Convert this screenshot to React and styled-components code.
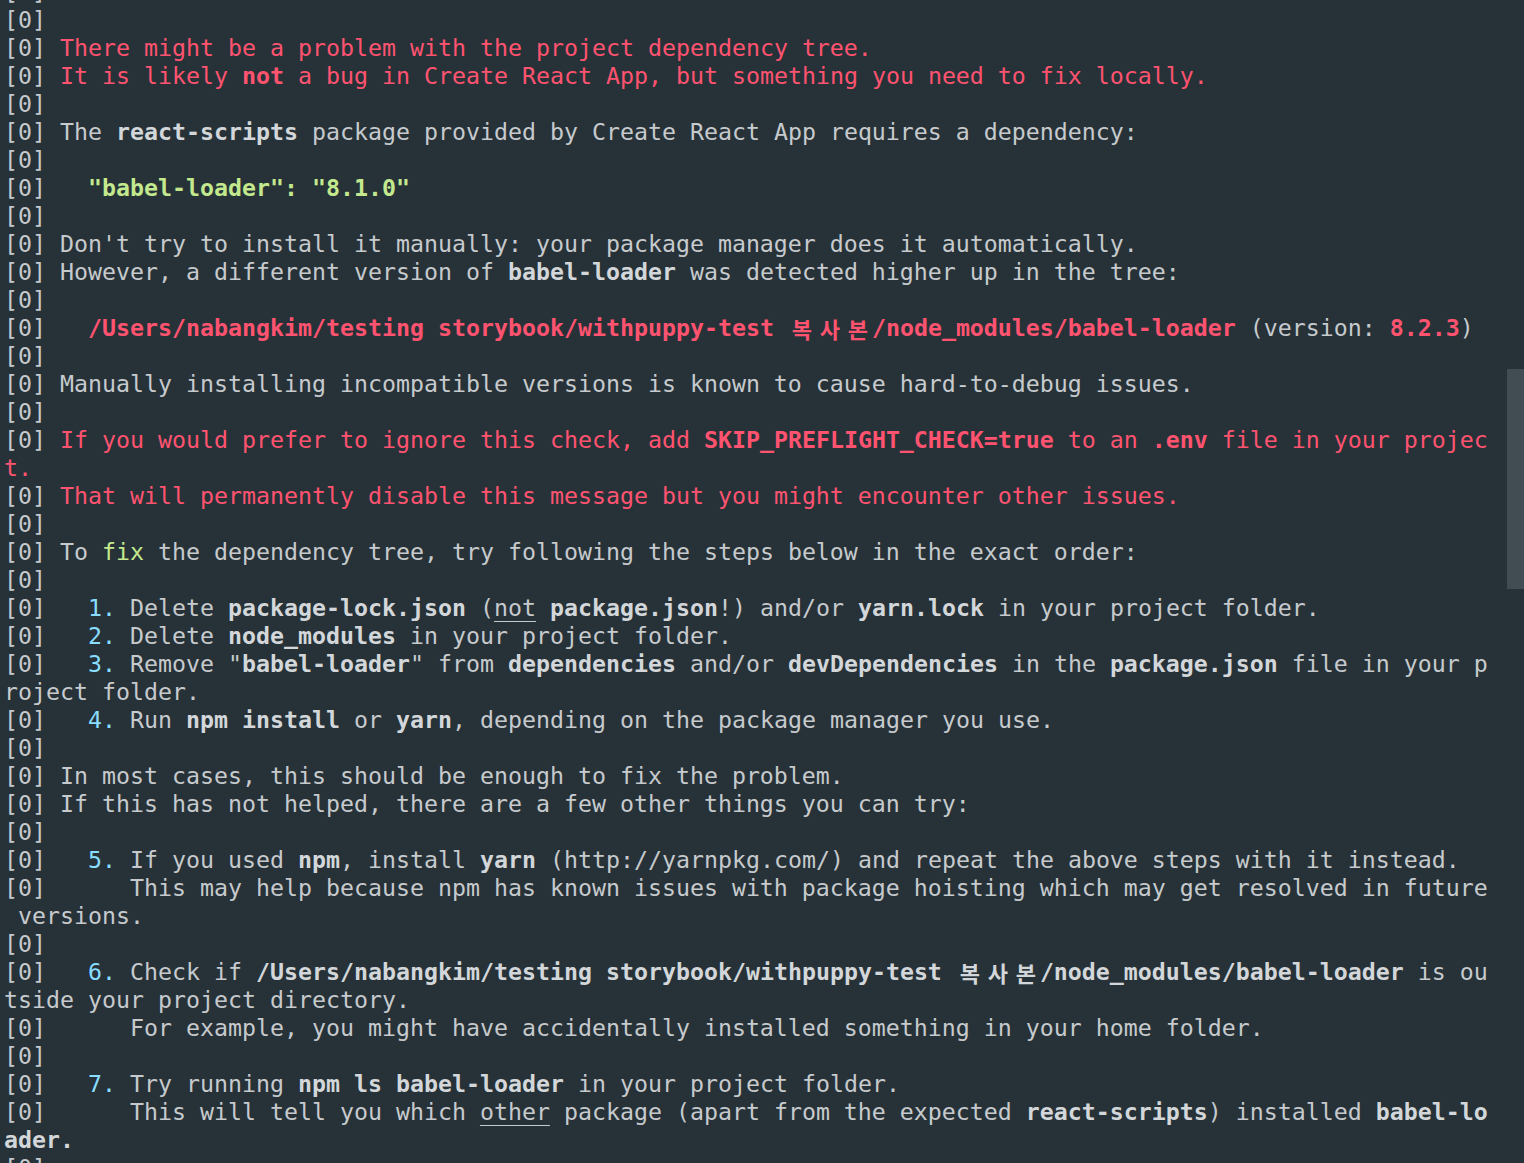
// Terminal : CRA preflight check 오류 로그 화면

import React from "react";
import styled, { createGlobalStyle, css } from "styled-components";

const colors = {
  bg: "#263238",
  text: "#c6cacd",
  red: "#ff5370",
  green: "#c3e88d",
  cyan: "#89ddff",
  thumb: "#414c53",
};

const GlobalStyle = createGlobalStyle`
  html, body {
    margin: 0;
    padding: 0;
    background: ${colors.bg};
    overflow: hidden;
  }
`;

// 한 줄의 조각: [텍스트, 스타일, 전각문자 여부]
const P = "[0]";
const LINES = [
  [[P]],
  [[P]],
  [["[0] "], ["There might be a problem with the project dependency tree.", "red"]],
  [
    ["[0] "],
    ["It is likely ", "red"],
    ["not", "redBold"],
    [" a bug in Create React App, but something you need to fix locally.", "red"],
  ],
  [[P]],
  [
    ["[0] The "],
    ["react-scripts", "bold"],
    [" package provided by Create React App requires a dependency:"],
  ],
  [[P]],
  [["[0]   "], ['"babel-loader": "8.1.0"', "greenBold"]],
  [[P]],
  [["[0] Don't try to install it manually: your package manager does it automatically."]],
  [
    ["[0] However, a different version of "],
    ["babel-loader", "bold"],
    [" was detected higher up in the tree:"],
  ],
  [[P]],
  [
    ["[0]   "],
    ["/Users/nabangkim/testing storybook/withpuppy-test ", "redBold"],
    ["복사본", "redBold", true],
    ["/node_modules/babel-loader", "redBold"],
    [" (version: "],
    ["8.2.3", "redBold"],
    [")"],
  ],
  [[P]],
  [["[0] Manually installing incompatible versions is known to cause hard-to-debug issues."]],
  [[P]],
  [
    ["[0] "],
    ["If you would prefer to ignore this check, add ", "red"],
    ["SKIP_PREFLIGHT_CHECK=true", "redBold"],
    [" to an ", "red"],
    [".env", "redBold"],
    [" file in your projec", "red"],
  ],
  [["t.", "red"]],
  [
    ["[0] "],
    ["That will permanently disable this message but you might encounter other issues.", "red"],
  ],
  [[P]],
  [
    ["[0] To "],
    ["fix", "green"],
    [" the dependency tree, try following the steps below in the exact order:"],
  ],
  [[P]],
  [
    ["[0]   "],
    ["1.", "cyan"],
    [" Delete "],
    ["package-lock.json", "bold"],
    [" ("],
    ["not", "under"],
    [" "],
    ["package.json", "bold"],
    ["!) and/or "],
    ["yarn.lock", "bold"],
    [" in your project folder."],
  ],
  [
    ["[0]   "],
    ["2.", "cyan"],
    [" Delete "],
    ["node_modules", "bold"],
    [" in your project folder."],
  ],
  [
    ["[0]   "],
    ["3.", "cyan"],
    [' Remove "'],
    ["babel-loader", "bold"],
    ['" from '],
    ["dependencies", "bold"],
    [" and/or "],
    ["devDependencies", "bold"],
    [" in the "],
    ["package.json", "bold"],
    [" file in your p"],
  ],
  [["roject folder."]],
  [
    ["[0]   "],
    ["4.", "cyan"],
    [" Run "],
    ["npm install", "bold"],
    [" or "],
    ["yarn", "bold"],
    [", depending on the package manager you use."],
  ],
  [[P]],
  [["[0] In most cases, this should be enough to fix the problem."]],
  [["[0] If this has not helped, there are a few other things you can try:"]],
  [[P]],
  [
    ["[0]   "],
    ["5.", "cyan"],
    [" If you used "],
    ["npm", "bold"],
    [", install "],
    ["yarn", "bold"],
    [" (http://yarnpkg.com/) and repeat the above steps with it instead."],
  ],
  [
    [
      "[0]      This may help because npm has known issues with package hoisting which may get resolved in future",
    ],
  ],
  [[" versions."]],
  [[P]],
  [
    ["[0]   "],
    ["6.", "cyan"],
    [" Check if "],
    ["/Users/nabangkim/testing storybook/withpuppy-test ", "bold"],
    ["복사본", "bold", true],
    ["/node_modules/babel-loader", "bold"],
    [" is ou"],
  ],
  [["tside your project directory."]],
  [["[0]      For example, you might have accidentally installed something in your home folder."]],
  [[P]],
  [
    ["[0]   "],
    ["7.", "cyan"],
    [" Try running "],
    ["npm ls babel-loader", "bold"],
    [" in your project folder."],
  ],
  [
    ["[0]      This will tell you which "],
    ["other", "under"],
    [" package (apart from the expected "],
    ["react-scripts", "bold"],
    [") installed "],
    ["babel-lo", "bold"],
  ],
  [["ader.", "bold"]],
  [[P]],
];

const Segment = ({ text, tone, wide }) => {
  if (wide) {
    return (
      <Span $tone={tone}>
        {[...text].map((ch, i) => (
          <Wide key={i}>{ch}</Wide>
        ))}
      </Span>
    );
  }
  return <Span $tone={tone}>{text}</Span>;
};

const App = () => {
  return (
    <>
      <GlobalStyle />
      <Terminal>
        <Log>
          {LINES.map((line, i) => (
            <Row key={i}>
              {line.map(([text, tone, wide], j) => (
                <Segment key={j} text={text} tone={tone} wide={wide} />
              ))}
            </Row>
          ))}
        </Log>
        <Thumb />
      </Terminal>
    </>
  );
};

const Terminal = styled.div`
  position: relative;
  width: 1524px;
  height: 1163px;
  overflow: hidden;
  background: ${colors.bg};
`;

// 스크롤된 상태: 첫 줄이 위로 잘려 있음
const Log = styled.div`
  margin-top: -22px;
  padding-left: 4px;
  font-family: "DejaVu Sans Mono", "Noto Sans CJK KR", monospace;
  font-size: 23.25px;
  line-height: 28px;
  color: ${colors.text};
`;

const Row = styled.div`
  height: 28px;
  white-space: pre;
`;

const tones = {
  red: css`
    color: ${colors.red};
  `,
  redBold: css`
    color: ${colors.red};
    font-weight: 700;
  `,
  bold: css`
    font-weight: 700;
    color: #d3d7da;
  `,
  green: css`
    color: ${colors.green};
  `,
  greenBold: css`
    color: ${colors.green};
    font-weight: 700;
  `,
  cyan: css`
    color: ${colors.cyan};
  `,
  under: css`
    text-decoration: underline;
    text-underline-offset: 5px;
    text-decoration-thickness: 1px;
  `,
};

const Span = styled.span`
  ${({ $tone }) => ($tone ? tones[$tone] : "")}
`;

// 한글 한 글자는 터미널 두 칸(28px)을 차지
const Wide = styled.span`
  display: inline-block;
  width: 28px;
  text-align: center;
  font-family: "Noto Sans CJK KR", sans-serif;
  font-size: 22px;
  vertical-align: top;
`;

const Thumb = styled.div`
  position: absolute;
  top: 369px;
  right: 0;
  width: 17px;
  height: 220px;
  background: ${colors.thumb};
`;

export default App;
